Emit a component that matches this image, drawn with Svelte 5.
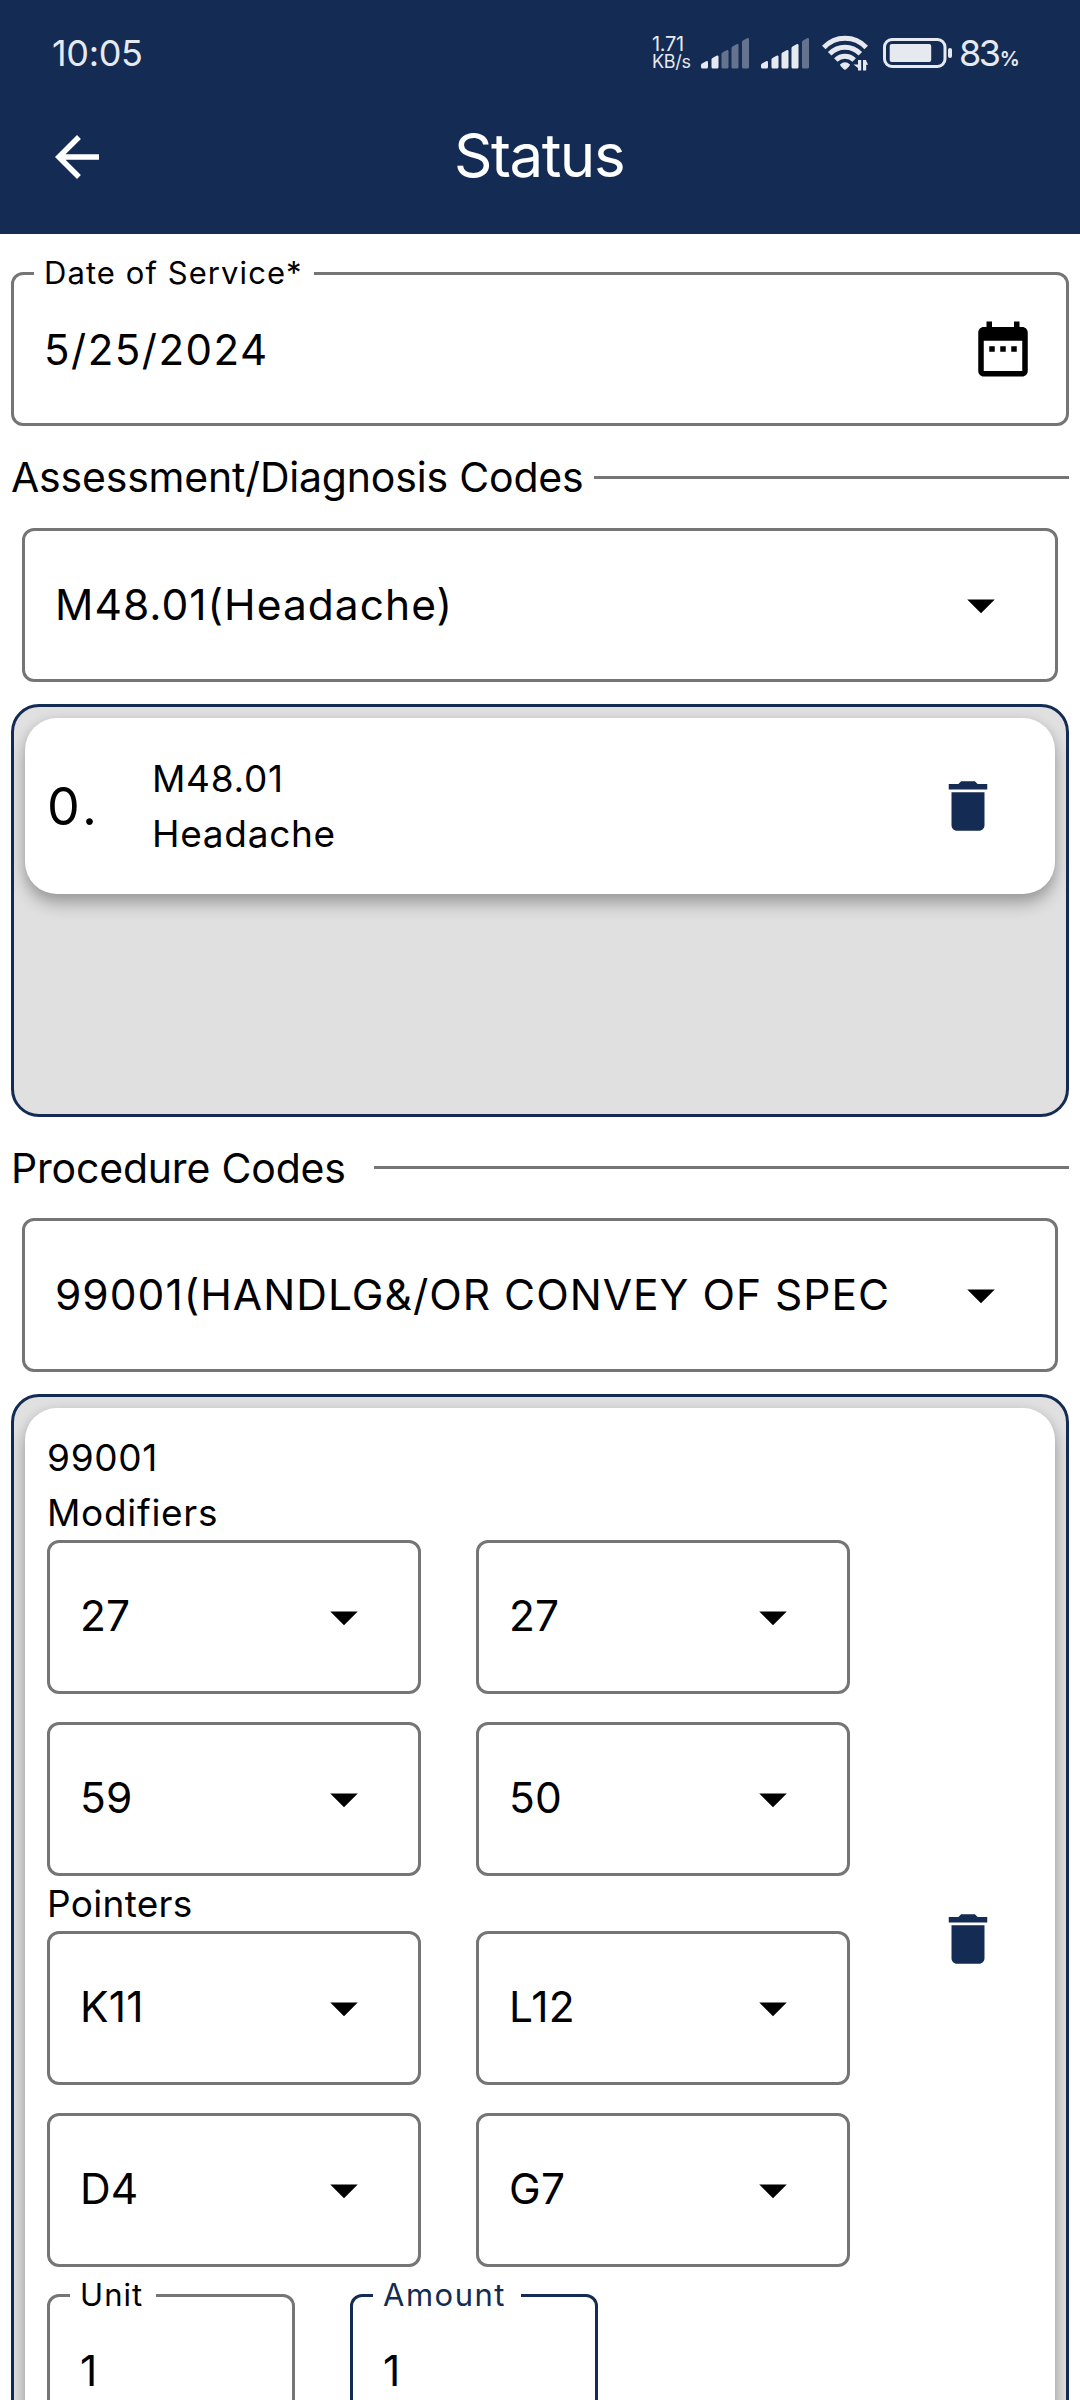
<script>
  const modifiers = ['27', '27', '59', '50'];
  const pointers = ['K11', 'L12', 'D4', 'G7'];

  // Signal bars: left edge, top of the bar
  const bars = [[0, 24], [10.5, 18.5], [20.5, 13], [30.5, 7], [41, 1]];
  const signals = [2, 4];
</script>

{#snippet caret()}
  <svg class="icon caret" viewBox="0 0 24 24"><path d="M7 10l5 5 5-5z" /></svg>
{/snippet}

{#snippet trash()}
  <svg class="icon trash" viewBox="0 0 24 24">
    <path d="M6 19c0 1.1.9 2 2 2h8c1.1 0 2-.9 2-2V7H6v12zM19 4h-3.5l-1-1h-5l-1 1H5v2h14V4z" />
  </svg>
{/snippet}

{#snippet select(value)}
  <div class="box select"><span class="value">{value}</span>{@render caret()}</div>
{/snippet}

<div class="app">
  <header>
    <div class="statusbar">
      <span class="time">10:05</span>
      <div class="indicators">
        <div class="speed"><span class="rate">1.71</span><span class="unit">KB/s</span></div>
        {#each signals as level}
          <svg class="signal" viewBox="0 0 48 32">
            {#each bars as [x, y], i}
              <path
                class:dim={i >= level}
                d="M{x} {y + 4}q0-1 1-1.600l4-2.200q2-.8 2 1V30q0 1.500-1.500 1.500H{x + 1.5}q-1.500 0-1.500-1.500z"
              />
            {/each}
          </svg>
        {/each}
        <svg class="wifi" viewBox="0 0 46 36">
          <g class="arcs">
            <path d="M1.800 12.500C13.500 .2 32.500 .2 44.200 12.500" />
            <path d="M7.700 18.800c8.700-8.700 21.900-8.700 30.600 0" />
            <path d="M13.800 25c5.300-5 13.100-5 18.400 0" />
          </g>
          <path d="M18 29.500q5-4.500 10 0q-.5 2.300-5 5.500q-4.500-3.200-5-5.500z" />
          <path d="M36 25h3.200v10.500H36v-2.500l-4.500-3.500H36zM41 35.500V25h3.200v1l2 3.800h-2v5.700z" />
        </svg>
        <svg class="battery" viewBox="0 0 70 32">
          <rect class="shell" x="1.500" y="2.500" width="60.500" height="27" rx="7.500" />
          <rect x="6.700" y="7" width="41.500" height="18" rx="2" />
          <rect x="65" y="11" width="4" height="10" rx="2" />
        </svg>
        <span class="percent">83<small>%</small></span>
      </div>
    </div>
    <div class="titlebar">
      <svg class="icon" viewBox="0 0 24 24">
        <path d="M20 11H7.830l5.590-5.590L12 4l-8 8 8 8 1.410-1.410L7.830 13H20v-2z" />
      </svg>
      <h1>Status</h1>
    </div>
  </header>

  <main>
    <div class="box field date">
      <span class="label">Date of Service*</span>
      <span class="value">5/25/2024</span>
      <svg class="icon" viewBox="0 0 24 24">
        <path d="M9 11H7v2h2v-2zm4 0h-2v2h2v-2zm4 0h-2v2h2v-2zm2-7h-1V2h-2v2H8V2H6v2H5c-1.110 0-1.990.9-1.990 2L3 20c0 1.100.89 2 2 2h14c1.100 0 2-.9 2-2V6c0-1.100-.9-2-2-2zm0 16H5V9h14v11z" />
      </svg>
    </div>

    <h2 class="assessment">Assessment/Diagnosis Codes</h2>
    <div class="wide">{@render select('M48.01(Headache)')}</div>
    <section class="list diagnoses">
      <article class="card">
        <span class="index">0.</span>
        <div class="info">
          <span>M48.01</span>
          <span>Headache</span>
        </div>
        {@render trash()}
      </article>
    </section>

    <h2 class="procedure">Procedure Codes</h2>
    <div class="wide">{@render select('99001(HANDLG&/OR CONVEY OF SPEC')}</div>
    <section class="list procedures">
      <article class="card">
        <div class="info">
          <span>99001</span>
          <span>Modifiers</span>
          <div class="grid">
            {#each modifiers as m}{@render select(m)}{/each}
          </div>
          <span class="pointers">Pointers</span>
          <div class="grid">
            {#each pointers as p}{@render select(p)}{/each}
          </div>
          <div class="amounts">
            <div class="box field"><span class="label unit-label">Unit</span><span class="value">1</span></div>
            <div class="box field active"><span class="label amount-label">Amount</span><span class="value">1</span></div>
          </div>
        </div>
        {@render trash()}
      </article>
    </section>
  </main>
</div>

<style>
  :global(body) {
    background: #fff;
  }
  .app {
    width: 1080px;
    height: 2400px;
    overflow: hidden;
    font-family: Inter, sans-serif;
    color: #000;
    --navy: #142c53;
    --gray: #757575;
  }
  .app *,
  .app {
    box-sizing: border-box;
  }
  .icon {
    width: 66px;
    height: 66px;
    flex: none;
    fill: currentColor;
  }

  header {
    height: 234px;
    background: var(--navy);
    color: #fff;
  }
  .statusbar {
    height: 105px;
    padding: 0 63px 0 52px;
    display: flex;
    align-items: center;
    justify-content: space-between;
    color: #e7e9f0;
    fill: #e7e9f0;
  }
  .time {
    font-size: 36px;
    letter-spacing: -0.35px;
  }
  .indicators {
    display: flex;
    align-items: center;
  }
  .speed {
    display: flex;
    flex-direction: column;
    width: 49px;
    line-height: 18px;
    letter-spacing: -0.3px;
  }
  .rate {
    font-size: 20px;
  }
  .unit {
    font-size: 18px;
  }
  .signal {
    width: 48px;
    height: 32px;
    margin-right: 12px;
  }
  .dim {
    opacity: 0.38;
  }
  .wifi {
    width: 46px;
    height: 36px;
    margin: 0 15px 0 1px;
  }
  .arcs {
    fill: none;
    stroke: #e7e9f0;
    stroke-width: 5;
  }
  .battery {
    width: 70px;
    height: 32px;
    margin-right: 6px;
  }
  .shell {
    fill: none;
    stroke: #e7e9f0;
    stroke-width: 3;
  }
  .percent {
    width: 58px;
    font-size: 36px;
    letter-spacing: -2.4px;
    white-space: nowrap;
  }
  .percent small {
    font-size: 20px;
    font-weight: 600;
    margin-left: 1px;
    letter-spacing: 0;
  }
  .titlebar {
    height: 104px;
    padding: 0 46px 0 44px;
    display: grid;
    grid-template-columns: 66px 1fr 66px;
    align-items: center;
  }
  h1 {
    margin: 0;
    font-size: 60px;
    line-height: 100px;
    font-weight: 400;
    letter-spacing: -1.44px;
    text-align: center;
    padding-bottom: 4px;
  }

  main {
    padding: 38px 11px 0;
    display: flex;
    flex-direction: column;
  }
  .box {
    height: 154px;
    border: 3px solid var(--gray);
    border-radius: 12px;
    padding-left: 30px;
    display: flex;
    align-items: center;
    justify-content: space-between;
  }
  .value {
    font-size: 42.5px;
    white-space: nowrap;
  }
  .select {
    padding-right: 41px;
  }
  .select .value {
    padding-bottom: 2px;
    letter-spacing: 0.2px;
  }
  .wide {
    padding: 0 11px;
  }
  .wide .value {
    letter-spacing: 1.02px;
  }

  /* Outlined text field whose label interrupts the top border */
  .field {
    position: relative;
  }
  .label {
    position: absolute;
    top: -22px;
    left: 20px;
    padding-left: 10px;
    background: #fff;
    font-size: 31px;
    line-height: 40px;
    letter-spacing: 1.07px;
  }
  .date {
    padding: 0 30px;
  }
  .date .value {
    font-size: 42px;
    letter-spacing: 1.5px;
  }
  .date .label {
    width: 280px;
  }
  .unit-label {
    width: 86px;
  }
  .amount-label {
    width: 148px;
    letter-spacing: 1.5px;
  }
  .active {
    border-color: var(--navy);
  }
  .active .label {
    color: var(--navy);
  }

  h2 {
    margin: 0;
    height: 102px;
    display: flex;
    align-items: center;
    font-size: 41px;
    font-weight: 400;
    letter-spacing: -0.19px;
    white-space: nowrap;
  }
  h2::after {
    content: '';
    flex: 1;
    height: 3px;
    background: var(--gray);
  }
  .assessment::after {
    margin-left: 11px;
  }
  .procedure {
    height: 101px;
  }
  .procedure::after {
    margin-left: 28px;
  }

  .list {
    margin-top: 22px;
    padding: 11px;
    border: 3px solid var(--navy);
    border-radius: 28px;
    background: #e0e0e0;
  }
  .diagnoses {
    height: 413px;
  }
  .procedures {
    height: 1089px;
  }
  .card {
    border-radius: 32px;
    background: #fff;
    box-shadow:
      0 11px 16px rgba(0, 0, 0, 0.24),
      0 2px 12px rgba(0, 0, 0, 0.13);
    padding: 22px 54px 22px 22px;
    display: flex;
    align-items: center;
    justify-content: space-between;
  }
  .diagnoses .card {
    height: 176px;
  }
  .procedures .card {
    height: 1061px;
  }
  .trash {
    color: var(--navy);
  }
  .index {
    width: 105px;
    font-size: 52px;
    letter-spacing: 3.5px;
  }
  .info {
    display: flex;
    flex-direction: column;
    font-size: 37px;
    line-height: 55px;
    letter-spacing: 0.7px;
  }
  .diagnoses .info {
    flex: 1;
  }
  .pointers {
    letter-spacing: 0.3px;
  }
  .grid {
    display: grid;
    grid-template-columns: 374px 374px;
    gap: 28px 55px;
  }
  .amounts {
    margin-top: 27px;
    display: flex;
    gap: 55px;
  }
  .amounts .box {
    width: 248px;
  }
</style>
